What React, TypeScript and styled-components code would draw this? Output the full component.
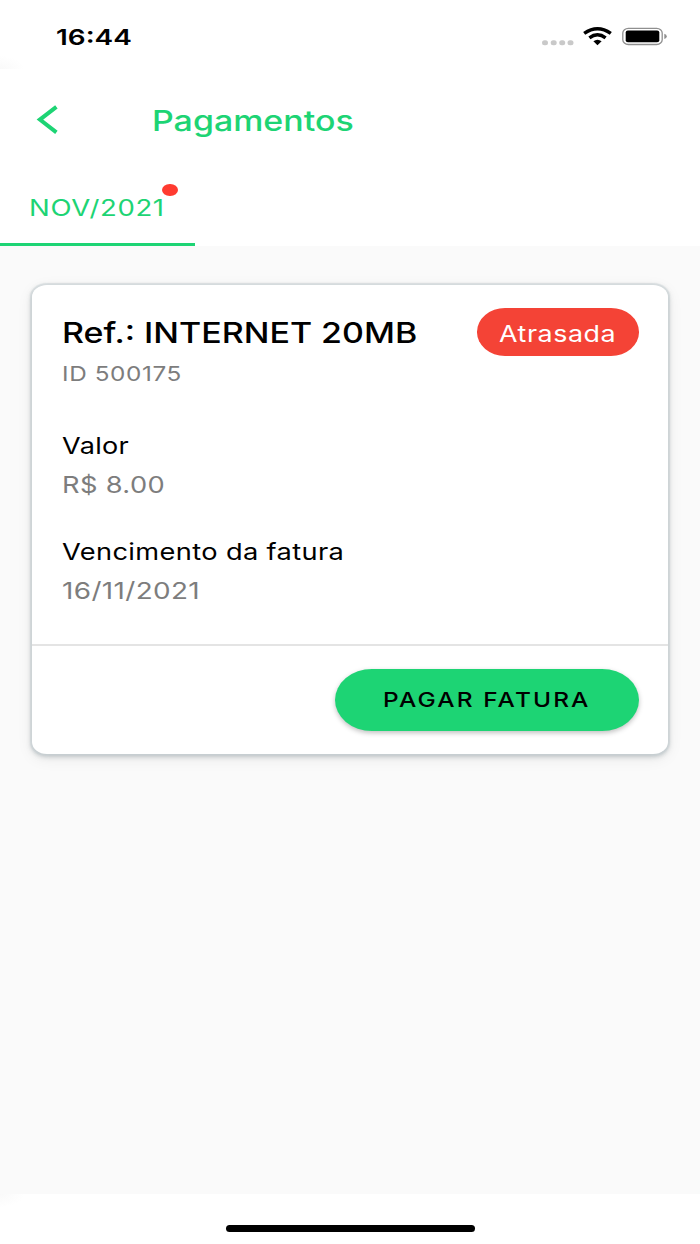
import React from "react";
import styled, { createGlobalStyle } from "styled-components";

const Global = createGlobalStyle`
  * { box-sizing: border-box; }
  html, body { margin: 0; padding: 0; background: #fff; }
  body { font-family: Inter, "Liberation Sans", sans-serif; color: #000; }
`;

const green = "#1dd474";

const Screen = styled.div`
  width: 700px;
  height: 1244px;
  display: flex;
  flex-direction: column;
  background: #fff;
  overflow: hidden;
`;

const Label = styled.span<{
  $size: number;
  $line: number;
  $stretch: number;
  $weight?: number;
  $color?: string;
  $spacing?: number;
}>`
  display: block;
  width: max-content;
  margin: 0;
  white-space: nowrap;
  font-size: ${(p) => p.$size}px;
  line-height: ${(p) => p.$line}px;
  font-weight: ${(p) => p.$weight ?? 400};
  color: ${(p) => p.$color ?? "#000"};
  letter-spacing: ${(p) => p.$spacing ?? 0}px;
  transform: scaleX(${(p) => p.$stretch});
  transform-origin: left center;
`;

const StatusBar = styled.div`
  flex: none;
  height: 69px;
  padding: 23px 33px 0 56px;
  display: flex;
  justify-content: space-between;
  align-items: flex-start;
  background: radial-gradient(ellipse 24px 13px at 0 100%, #f9f9f9, #fff);
`;

const StatusIcons = styled.svg`
  display: block;
  width: 126px;
  height: 28px;
`;

const Header = styled.header`
  flex: none;
  height: 101px;
  padding: 35px 0 0 36px;
  display: flex;
  align-items: flex-start;
`;

const Back = styled.button`
  width: 115.5px;
  height: 32px;
  padding: 0;
  border: 0;
  background: none;
  text-align: left;
  svg { display: block; }
`;

const Heading = styled.div`
  padding-top: 1px;
`;

const Tabs = styled.nav`
  flex: none;
  height: 76px;
  display: flex;
`;

const Tab = styled.div`
  position: relative;
  width: 194.5px;
  padding: 24px 0 0 29px;
  border-bottom: 3px solid ${green};
`;

const Dot = styled.i`
  position: absolute;
  left: 162px;
  top: 14px;
  width: 15.5px;
  height: 12px;
  border-radius: 50%;
  background: #ff3b30;
`;

const Content = styled.main`
  flex: 1;
  background: #fafafa;
  padding: 38.5px 32.5px 0 32px;
`;

const Card = styled.section`
  height: 469.5px;
  border-radius: 15px / 12px;
  background: #fff;
  box-shadow: 0 0 1px 2px rgba(200, 209, 211, 0.6), 0 2px 4px 1px rgba(150, 162, 166, 0.5),
    0 4px 16px rgba(0, 0, 0, 0.08);
`;

const Details = styled.div`
  height: 359.5px;
  padding: 32.5px 29px 0 29.5px;
`;

const TitleRow = styled.div`
  display: flex;
  justify-content: space-between;
  height: 77px;
`;

const Badge = styled.div`
  width: 162px;
  height: 47.5px;
  margin-top: -9px;
  padding: 12px 0 0 22.5px;
  border-radius: 28px / 23.75px;
  background: #f44336;
`;

const Sub = styled.div`
  padding-top: 13px;
`;

const Field = styled.div`
  display: grid;
  row-gap: 10.5px;
  padding-top: 38.2px;
  & + & { padding-top: 39.5px; }
`;

const Actions = styled.footer`
  height: 110px;
  border-top: 2px solid #e4e4e4;
  padding: 23px 29px 0 0;
  display: flex;
  justify-content: flex-end;
`;

const PayButton = styled.button`
  width: 303.5px;
  height: 62px;
  padding: 0 0 0 47.5px;
  border: 0;
  border-radius: 37px / 31px;
  background: ${green};
  font-family: inherit;
  text-align: left;
  box-shadow: 0 2px 5px rgba(0, 0, 0, 0.25);
`;

const HomeArea = styled.div`
  flex: none;
  height: 50.5px;
  padding-top: 31px;
  display: flex;
  justify-content: center;
  align-items: flex-start;
  background: radial-gradient(ellipse 24px 13px at 0 0, #f9f9f9, #fff);
`;

const HomeBar = styled.div`
  width: 249px;
  height: 7.5px;
  border-radius: 4px;
  background: #000;
`;

export default function App() {
  return (
    <Screen>
      <Global />
      <StatusBar>
        <Label $size={22} $line={28} $weight={600} $stretch={1.27}>16:44</Label>
        <StatusIcons viewBox="541 23 126 28">
          <g fill="#c9c9c9">
            <rect x="542" y="40.2" width="6" height="5" rx="2.5" />
            <rect x="550.7" y="40.2" width="6" height="5" rx="2.5" />
            <rect x="559.2" y="40.2" width="6" height="5" rx="2.5" />
            <rect x="567.5" y="40.2" width="6" height="5" rx="2.5" />
          </g>
          <g fill="none" stroke="#000" strokeWidth="3.5">
            <path d="M584.2 33.4 Q597.5 24 610.8 33.4" />
            <path d="M589.4 37.8 Q597.5 31.8 605.6 37.8" />
          </g>
          <path d="M593.4 41.3 Q597.5 38.3 601.6 41.3 L597.5 45.2 Z" />
          <rect x="622.8" y="28.3" width="39.4" height="16.2" rx="5.5" ry="4.8" fill="none" stroke="#8f8f8f" strokeWidth="1.3" />
          <rect x="625.7" y="30.6" width="33.6" height="11.7" rx="2.2" ry="1.8" />
          <path d="M664.3 33.8 Q666.8 34.5 666.8 36.4 T664.3 39 Z" fill="#8f8f8f" />
        </StatusIcons>
      </StatusBar>
      <Header>
        <Back aria-label="Voltar">
          <svg width="24" height="32" viewBox="0 0 24 32" fill="none" stroke={green} strokeWidth="4">
            <path d="M20.4 2.8 L3.9 15.6 L20.4 28.4" />
          </svg>
        </Back>
        <Heading>
          <Label as="h1" $size={28} $line={32} $weight={500} $stretch={1.212} $color={green}>Pagamentos</Label>
        </Heading>
      </Header>
      <Tabs>
        <Tab>
          <Label $size={22.5} $line={28} $stretch={1.225} $spacing={0.5} $color={green}>NOV/2021</Label>
          <Dot />
        </Tab>
      </Tabs>
      <Content>
        <Card>
          <Details>
            <TitleRow>
              <div>
                <Label $size={28} $line={32} $weight={500} $stretch={1.213}>Ref.: INTERNET 20MB</Label>
                <Sub>
                  <Label $size={20} $line={24} $stretch={1.215} $spacing={0.5} $color="#7d7d7d">ID 500175</Label>
                </Sub>
              </div>
              <Badge>
                <Label $size={23} $line={28} $stretch={1.165} $spacing={0.5} $color="#fff">Atrasada</Label>
              </Badge>
            </TitleRow>
            <Field>
              <Label $size={23} $line={28} $stretch={1.175} $spacing={0.3}>Valor</Label>
              <Label $size={23} $line={28} $stretch={1.185} $spacing={0.3} $color="#7d7d7d">R$ 8.00</Label>
            </Field>
            <Field>
              <Label $size={23} $line={28} $stretch={1.184} $spacing={0.3}>Vencimento da fatura</Label>
              <Label $size={23} $line={28} $stretch={1.213} $spacing={0.3} $color="#7d7d7d">16/11/2021</Label>
            </Field>
          </Details>
          <Actions>
            <PayButton>
              <Label $size={20.5} $line={28} $weight={500} $stretch={1.19} $spacing={1.8}>PAGAR FATURA</Label>
            </PayButton>
          </Actions>
        </Card>
      </Content>
      <HomeArea>
        <HomeBar />
      </HomeArea>
    </Screen>
  );
}
